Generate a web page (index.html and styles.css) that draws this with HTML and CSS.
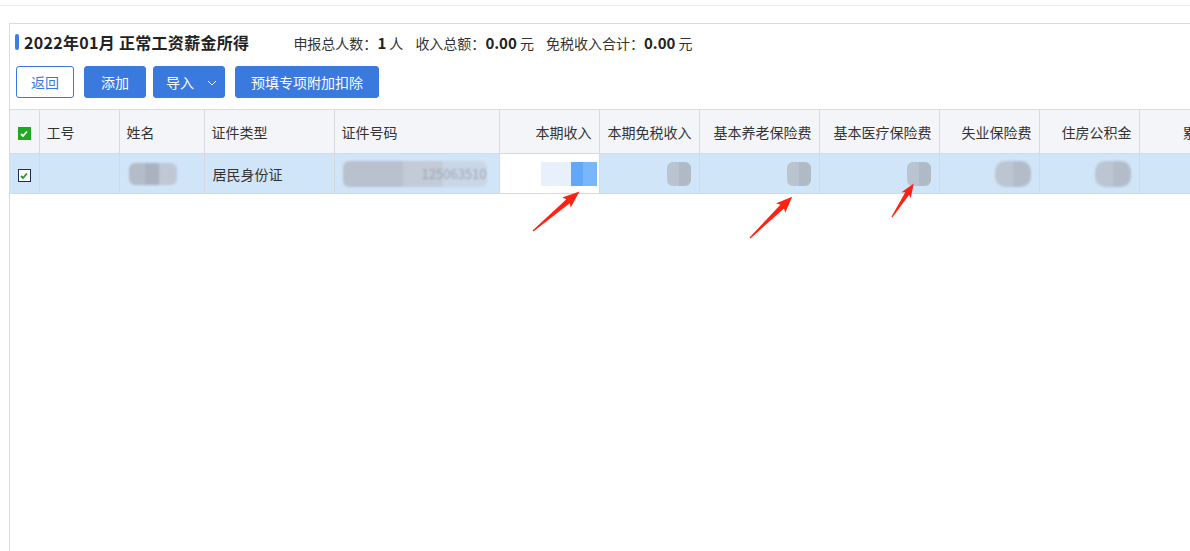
FILE: index.html
```html
<!DOCTYPE html>
<html lang="zh">
<head>
<meta charset="utf-8">
<link rel="stylesheet" href="styles.css">
</head>
<body>
<div class="topbar"></div>
<div class="panel">
  <div class="head">
    <span class="mark"></span>
    <h1 class="title">2022年01月 正常工资薪金所得</h1>
    <div class="stats">
      <span>申报总人数：<b>1</b> 人</span>
      <span>收入总额：<b>0.00</b> 元</span>
      <span>免税收入合计：<b>0.00</b> 元</span>
    </div>
  </div>
  <div class="actions">
    <button class="btn ghost">返回</button>
    <button class="btn w62">添加</button>
    <button class="btn drop">导入 <svg width="10" height="6" viewBox="0 0 10 6"><path d="M1 1l4 4 4-4" fill="none" stroke="#fff" stroke-width="1"/></svg></button>
    <button class="btn">预填专项附加扣除</button>
  </div>
  <div class="tablewrap">
    <table class="grid">
      <colgroup>
        <col style="width:29px"><col style="width:80px"><col style="width:85px"><col style="width:130px"><col style="width:165px"><col style="width:100px"><col style="width:100px"><col style="width:120px"><col style="width:120px"><col style="width:100px"><col style="width:100px"><col style="width:100px">
      </colgroup>
      <thead>
        <tr>
          <th class="ck"><span class="cb on"><svg width="10" height="10" viewBox="0 0 10 10"><path d="M2 5l2 2 4-4.5" fill="none" stroke="#fff" stroke-width="1.8"/></svg></span></th>
          <th>工号</th>
          <th>姓名</th>
          <th>证件类型</th>
          <th>证件号码</th>
          <th class="r">本期收入</th>
          <th class="r">本期免税收入</th>
          <th class="r">基本养老保险费</th>
          <th class="r">基本医疗保险费</th>
          <th class="r">失业保险费</th>
          <th class="r">住房公积金</th>
          <th class="r cut">累计</th>
        </tr>
      </thead>
      <tbody>
        <tr class="sel">
          <td class="ck"><span class="cb box"><svg width="10" height="10" viewBox="0 0 10 10"><path d="M2 5l2 2 4-4.5" fill="none" stroke="#1e9a1e" stroke-width="1.8"/></svg></span></td>
          <td></td>
          <td><span class="blur name"></span></td>
          <td>居民身份证</td>
          <td><span class="blur idno">125063510</span></td>
          <td class="r white"><span class="fade"></span><span class="bluesq"></span></td>
          <td class="r"><span class="blur sm"></span></td>
          <td class="r"><span class="blur sm"></span></td>
          <td class="r"><span class="blur sm"></span></td>
          <td class="r"><span class="blur md"></span></td>
          <td class="r"><span class="blur md"></span></td>
          <td></td>
        </tr>
      </tbody>
    </table>
  </div>
</div>
<svg class="arrows" width="1190" height="551" viewBox="0 0 1190 551">
  <path transform="translate(533 231) rotate(-40.4)" d="M0 -0.6 L46 -2.6 L44 -6.5 L61 0 L44 6.5 L46 2.6 L0 0.6 Z" fill="#ff2212"/>
  <path transform="translate(750 238) rotate(-44.3)" d="M0 -0.6 L45 -2.6 L43 -6.5 L59 0 L43 6.5 L45 2.6 L0 0.6 Z" fill="#ff2212"/>
  <path transform="translate(892 217) rotate(-57.1)" d="M0 -0.6 L28 -2.3 L26 -5.5 L40 0 L26 5.5 L28 2.3 L0 0.6 Z" fill="#ff2212"/>
</svg>
</body>
</html>
```
FILE: styles.css
```css
html, body {
  margin: 0;
  padding: 0;
  background: #fff;
  font-family: "Noto Sans CJK SC", "Microsoft YaHei", sans-serif;
  color: #333;
  width: 1190px;
  height: 551px;
  overflow: hidden;
}
.topbar {
  height: 5px;
  border-bottom: 1px solid #eeeeee;
}
.panel {
  margin: 17px 0 0 9px;
  border: 1px solid #dcdcdc;
  border-right: none;
  height: 540px;
  box-sizing: border-box;
}
.head {
  display: flex;
  align-items: center;
  height: 36px;
  padding: 0 0 0 5px;
}
.mark {
  width: 4px;
  height: 16px;
  background: #3f7fe0;
  border-radius: 2px;
  margin-right: 5px;
}
.title {
  margin: 0;
  font-size: 16px;
  font-weight: bold;
  color: #222;
  letter-spacing: 0.3px;
}
.stats {
  margin-left: 44px;
  display: flex;
  gap: 12px;
  font-size: 14px;
  color: #333;
  padding-top: 1px;
}
.stats b {
  font-size: 15px;
  color: #222;
}
.actions {
  display: flex;
  padding: 6px 0 0 6px;
  height: 43px;
  align-items: flex-start;
}
.btn {
  height: 32px;
  border: 1px solid #3a79dd;
  background: #3a79dd;
  color: #fff;
  border-radius: 3px;
  font-family: inherit;
  font-size: 14px;
  padding: 0 15px;
  margin-right: 7px;
  cursor: pointer;
}
.btn.ghost {
  background: #fff;
  color: #3a79dd;
  width: 58px;
  padding: 0;
  margin-right: 10px;
}
.btn.w62 { width: 62px; padding: 0; }
.btn.drop {
  width: 72px;
  padding: 0 0 0 12px;
  text-align: left;
  margin-right: 10px;
}
.btn.drop svg { margin-left: 10px; vertical-align: 2px; }
.tablewrap {
  border-top: 1px solid #dcdcdc;
  overflow: hidden;
}
.grid {
  border-collapse: collapse;
  table-layout: fixed;
  width: 1229px;
  font-size: 14px;
}
.grid th {
  height: 43px;
  background: #f4f5f9;
  font-weight: normal;
  text-align: left;
  padding: 0 7px;
  border-right: 1px solid #d8d9de;
  border-bottom: 1px solid #d8d9de;
  color: #333;
  white-space: nowrap;
  overflow: hidden;
}
.grid td {
  height: 39px;
  padding: 0 8px;
  border-right: 1px solid #d8d9de;
  border-bottom: 1px solid #d8d9de;
  white-space: nowrap;
  overflow: hidden;
}
.grid .r { text-align: right; }
.grid .cut { text-align: left; padding-left: 43px; }
.grid .ck { padding: 0; text-align: center; }
.sel td { background: #d1e5f9; }
.sel td.white { background: #fff; padding-right: 2px; }
.cb {
  display: inline-flex;
  width: 13px;
  height: 13px;
  box-sizing: border-box;
  align-items: center;
  justify-content: center;
  vertical-align: middle;
}
.cb.on { background: #21a821; }
.cb.box { background: #fff; border: 1px solid #1c2a5c; }
.blur {
  display: inline-block;
  vertical-align: middle;
  border-radius: 6px;
}
.blur.name {
  width: 48px;
  height: 22px;
  margin-left: 1px;
  background: linear-gradient(90deg, #b3bcc8 0 16px, #a9b2bf 16px 30px, #c0c8d4 30px);
  filter: blur(0.8px);
}
.blur.idno {
  width: 144px;
  height: 26px;
  line-height: 26px;
  text-align: right;
  font-size: 13px;
  color: #9aa6b6;
  background: linear-gradient(90deg, #b8c1cd 0 60px, #c3cbd6 60px 100px, rgba(200,208,220,0.7) 100px);
  filter: blur(0.8px);
}
.fade {
  display: inline-block;
  width: 30px;
  height: 24px;
  vertical-align: middle;
  background: #e8f1fb;
}
.bluesq {
  display: inline-block;
  width: 26px;
  height: 24px;
  vertical-align: middle;
  background: linear-gradient(90deg, #63a8f8 0 12px, #7ab6fa 12px);
}
.blur.sm {
  width: 24px;
  height: 24px;
  background: linear-gradient(90deg, #bac4d0 0 12px, #b0bac7 12px);
  filter: blur(0.6px);
}
.blur.md {
  width: 36px;
  height: 26px;
  border-radius: 10px;
  background: linear-gradient(90deg, #bcc6d2 0 18px, #b3bdca 18px);
  filter: blur(0.8px);
}
.arrows {
  position: absolute;
  left: 0;
  top: 0;
  pointer-events: none;
}
```
